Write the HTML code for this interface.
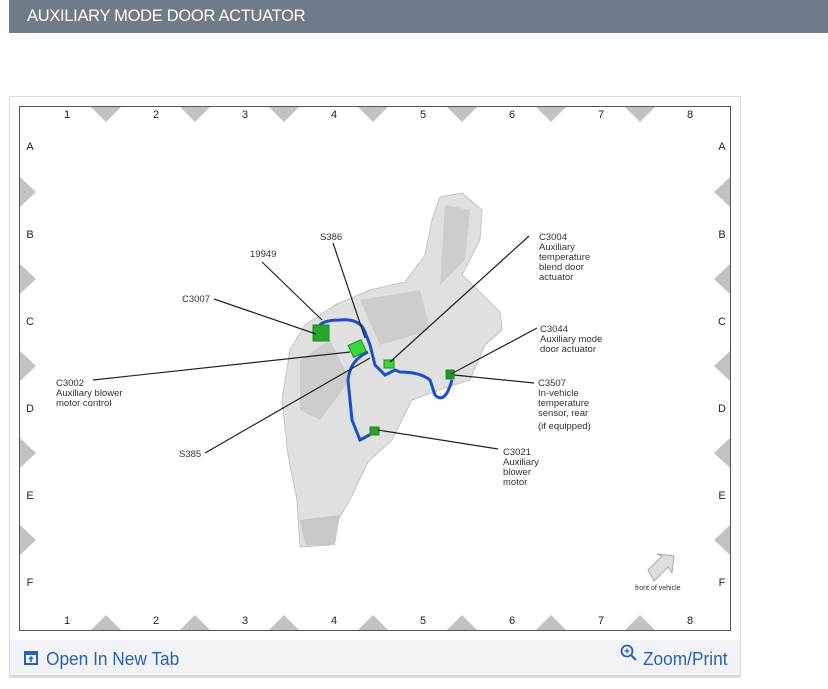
<!DOCTYPE html>
<html><head><meta charset="utf-8"><style>
body{margin:0;width:828px;height:689px;background:#fff;position:relative;overflow:hidden;font-family:"Liberation Sans",sans-serif}
.hdr{position:absolute;left:9px;top:0;width:819px;height:33px;background:#707b89;color:#fff;font-size:16.5px;line-height:33px;padding-left:18px;box-sizing:border-box;letter-spacing:-0.3px}
.card{position:absolute;left:9px;top:96px;width:732px;height:582px;border:1px solid #dcdcdc;box-sizing:border-box;background:#fff}
.foot{position:absolute;left:10px;top:640px;width:730px;height:37px;background:#f1f3f7;border-bottom:2px solid #d8d8d8;box-sizing:border-box}
.foot span{position:absolute;top:9px;font-size:17px;color:#2a62b0;transform:scaleX(0.96);transform-origin:left}
svg text{font-family:"Liberation Sans",sans-serif}
</style></head><body>
<div class="hdr">AUXILIARY MODE DOOR ACTUATOR</div>
<div class="card"></div>
<svg style="position:absolute;left:0;top:0" width="828" height="689">
<rect x="19.5" y="106.5" width="711" height="524" fill="#fff" stroke="#555" stroke-width="1"/>
<g fill="#c2c2c2">
<polygon points="91,107 121,107 106,122"/><polygon points="180,107 210,107 195,122"/><polygon points="269,107 299,107 284,122"/><polygon points="358,107 388,107 373,122"/><polygon points="447,107 477,107 462,122"/><polygon points="536,107 566,107 551,122"/><polygon points="625,107 655,107 640,122"/>
<polygon points="91,630 121,630 106,615"/><polygon points="180,630 210,630 195,615"/><polygon points="269,630 299,630 284,615"/><polygon points="358,630 388,630 373,615"/><polygon points="447,630 477,630 462,615"/><polygon points="536,630 566,630 551,615"/><polygon points="625,630 655,630 640,615"/>
<polygon points="20,177 20,207 36,192"/><polygon points="20,264 20,294 36,279"/><polygon points="20,351 20,381 36,366"/><polygon points="20,438 20,468 36,453"/><polygon points="20,525 20,555 36,540"/>
<polygon points="730,177 730,207 714,192"/><polygon points="730,264 730,294 714,279"/><polygon points="730,351 730,381 714,366"/><polygon points="730,438 730,468 714,453"/><polygon points="730,525 730,555 714,540"/>
</g>
<g font-size="11" fill="#222" text-anchor="middle">
<text x="67" y="118">1</text><text x="156" y="118">2</text><text x="245" y="118">3</text><text x="334" y="118">4</text><text x="423" y="118">5</text><text x="512" y="118">6</text><text x="601" y="118">7</text><text x="690" y="118">8</text>
<text x="67" y="624">1</text><text x="156" y="624">2</text><text x="245" y="624">3</text><text x="334" y="624">4</text><text x="423" y="624">5</text><text x="512" y="624">6</text><text x="601" y="624">7</text><text x="690" y="624">8</text>
<text x="30" y="150">A</text><text x="30" y="238">B</text><text x="30" y="325">C</text><text x="30" y="412">D</text><text x="30" y="499">E</text><text x="30" y="586">F</text>
<text x="722" y="150">A</text><text x="722" y="238">B</text><text x="722" y="325">C</text><text x="722" y="412">D</text><text x="722" y="499">E</text><text x="722" y="586">F</text>
</g>
<path d="M440,197 L462,193 L482,210 L480,240 L462,275 L478,290 L500,312 L502,330 L485,345 L470,380 L445,388 L412,400 L392,440 L368,462 L350,500 L338,520 L330,545 L300,547 L297,500 L288,455 L282,400 L290,350 L305,325 L335,305 L370,290 L405,282 L425,255 L432,220 Z" fill="#e0e0e0" stroke="#c4c4c4"/>
<path d="M445,205 L470,210 L465,260 L440,285 Z M300,360 L330,340 L350,380 L320,420 L300,410 Z M360,300 L420,290 L430,330 L380,345 Z" fill="#cdcdcd"/>
<path d="M300,520 L340,515 L335,545 L305,545 Z" fill="#c8c8c8"/>
<g fill="none" stroke="#1a4fc9" stroke-width="3">
<path d="M318,330 Q318,320 340,320 Q360,318 365,332 L370,345 L375,365 L385,375 L395,370 L400,372 Q420,372 430,380 L435,395 Q445,405 452,380"/>
<path d="M368,352 Q350,360 348,380 L352,420 L360,440 L375,432"/>
</g>
<g fill="#3bd63b" stroke="#1e8a1e">
<rect x="313" y="325" width="16" height="16" fill="#2aa52a"/>
<rect x="350" y="342" width="14" height="13" transform="rotate(-25 357 348)"/>
<rect x="384" y="360" width="10" height="8"/>
<rect x="446" y="370" width="8" height="9" fill="#2a8f2a"/>
<rect x="370" y="427" width="9" height="8" fill="#2a9f2a"/>
</g>
<g stroke="#222" stroke-width="1.2" fill="none">
<line x1="214" y1="299" x2="316" y2="334"/>
<line x1="262" y1="262" x2="322" y2="320"/>
<line x1="333" y1="243" x2="365" y2="338"/>
<line x1="529" y1="236" x2="390" y2="362"/>
<line x1="537" y1="328" x2="451" y2="374"/>
<line x1="534" y1="383" x2="454" y2="375"/>
<line x1="93" y1="380" x2="350" y2="352"/>
<line x1="205" y1="453" x2="370" y2="358"/>
<line x1="498" y1="449" x2="378" y2="430"/>
</g>
<g font-size="9.5" fill="#333">
<text x="250" y="257">19949</text>
<text x="320" y="240">S386</text>
<text x="182" y="302">C3007</text>
<text x="56" y="386">C3002</text><text x="56" y="396">Auxiliary blower</text><text x="56" y="406">motor control</text>
<text x="179" y="457">S385</text>
<text x="539" y="240">C3004</text><text x="539" y="250">Auxiliary</text><text x="539" y="260">temperature</text><text x="539" y="270">blend door</text><text x="539" y="280">actuator</text>
<text x="540" y="332">C3044</text><text x="540" y="342">Auxiliary mode</text><text x="540" y="352">door actuator</text>
<text x="538" y="386">C3507</text><text x="538" y="396">In-vehicle</text><text x="538" y="406">temperature</text><text x="538" y="416">sensor, rear</text><text x="538" y="429">(if equipped)</text>
<text x="503" y="455">C3021</text><text x="503" y="465">Auxiliary</text><text x="503" y="475">blower</text><text x="503" y="485">motor</text>
<text x="635" y="590" font-size="7">front of vehicle</text>
</g>
<path d="M648,570 L662,556 L657,554 L674,556 L672,573 L668,567 L654,581 Z" fill="#dedede" stroke="#aaa"/>
</svg>
<div class="foot">
<svg style="position:absolute;left:14px;top:11px" width="14" height="14"><rect x="1" y="1" width="12" height="12" fill="none" stroke="#2a62b0" stroke-width="2"/><rect x="1" y="1" width="12" height="3" fill="#2a62b0"/><path d="M7,11 V6 M5,8 L7,6 L9,8" stroke="#2a62b0" stroke-width="1.5" fill="none"/></svg>
<span style="left:36px;font-size:18px">Open In New Tab</span>
<svg style="position:absolute;left:610px;top:4px" width="18" height="18"><circle cx="7" cy="7" r="5.5" fill="none" stroke="#2a62b0" stroke-width="1.8"/><path d="M11,11 L16,16" stroke="#2a62b0" stroke-width="2.2"/><path d="M7,4.5 V9.5 M4.5,7 H9.5" stroke="#2a62b0" stroke-width="1.2"/></svg>
<span style="left:633px;font-size:18px">Zoom/Print</span>
</div>
</body></html>
